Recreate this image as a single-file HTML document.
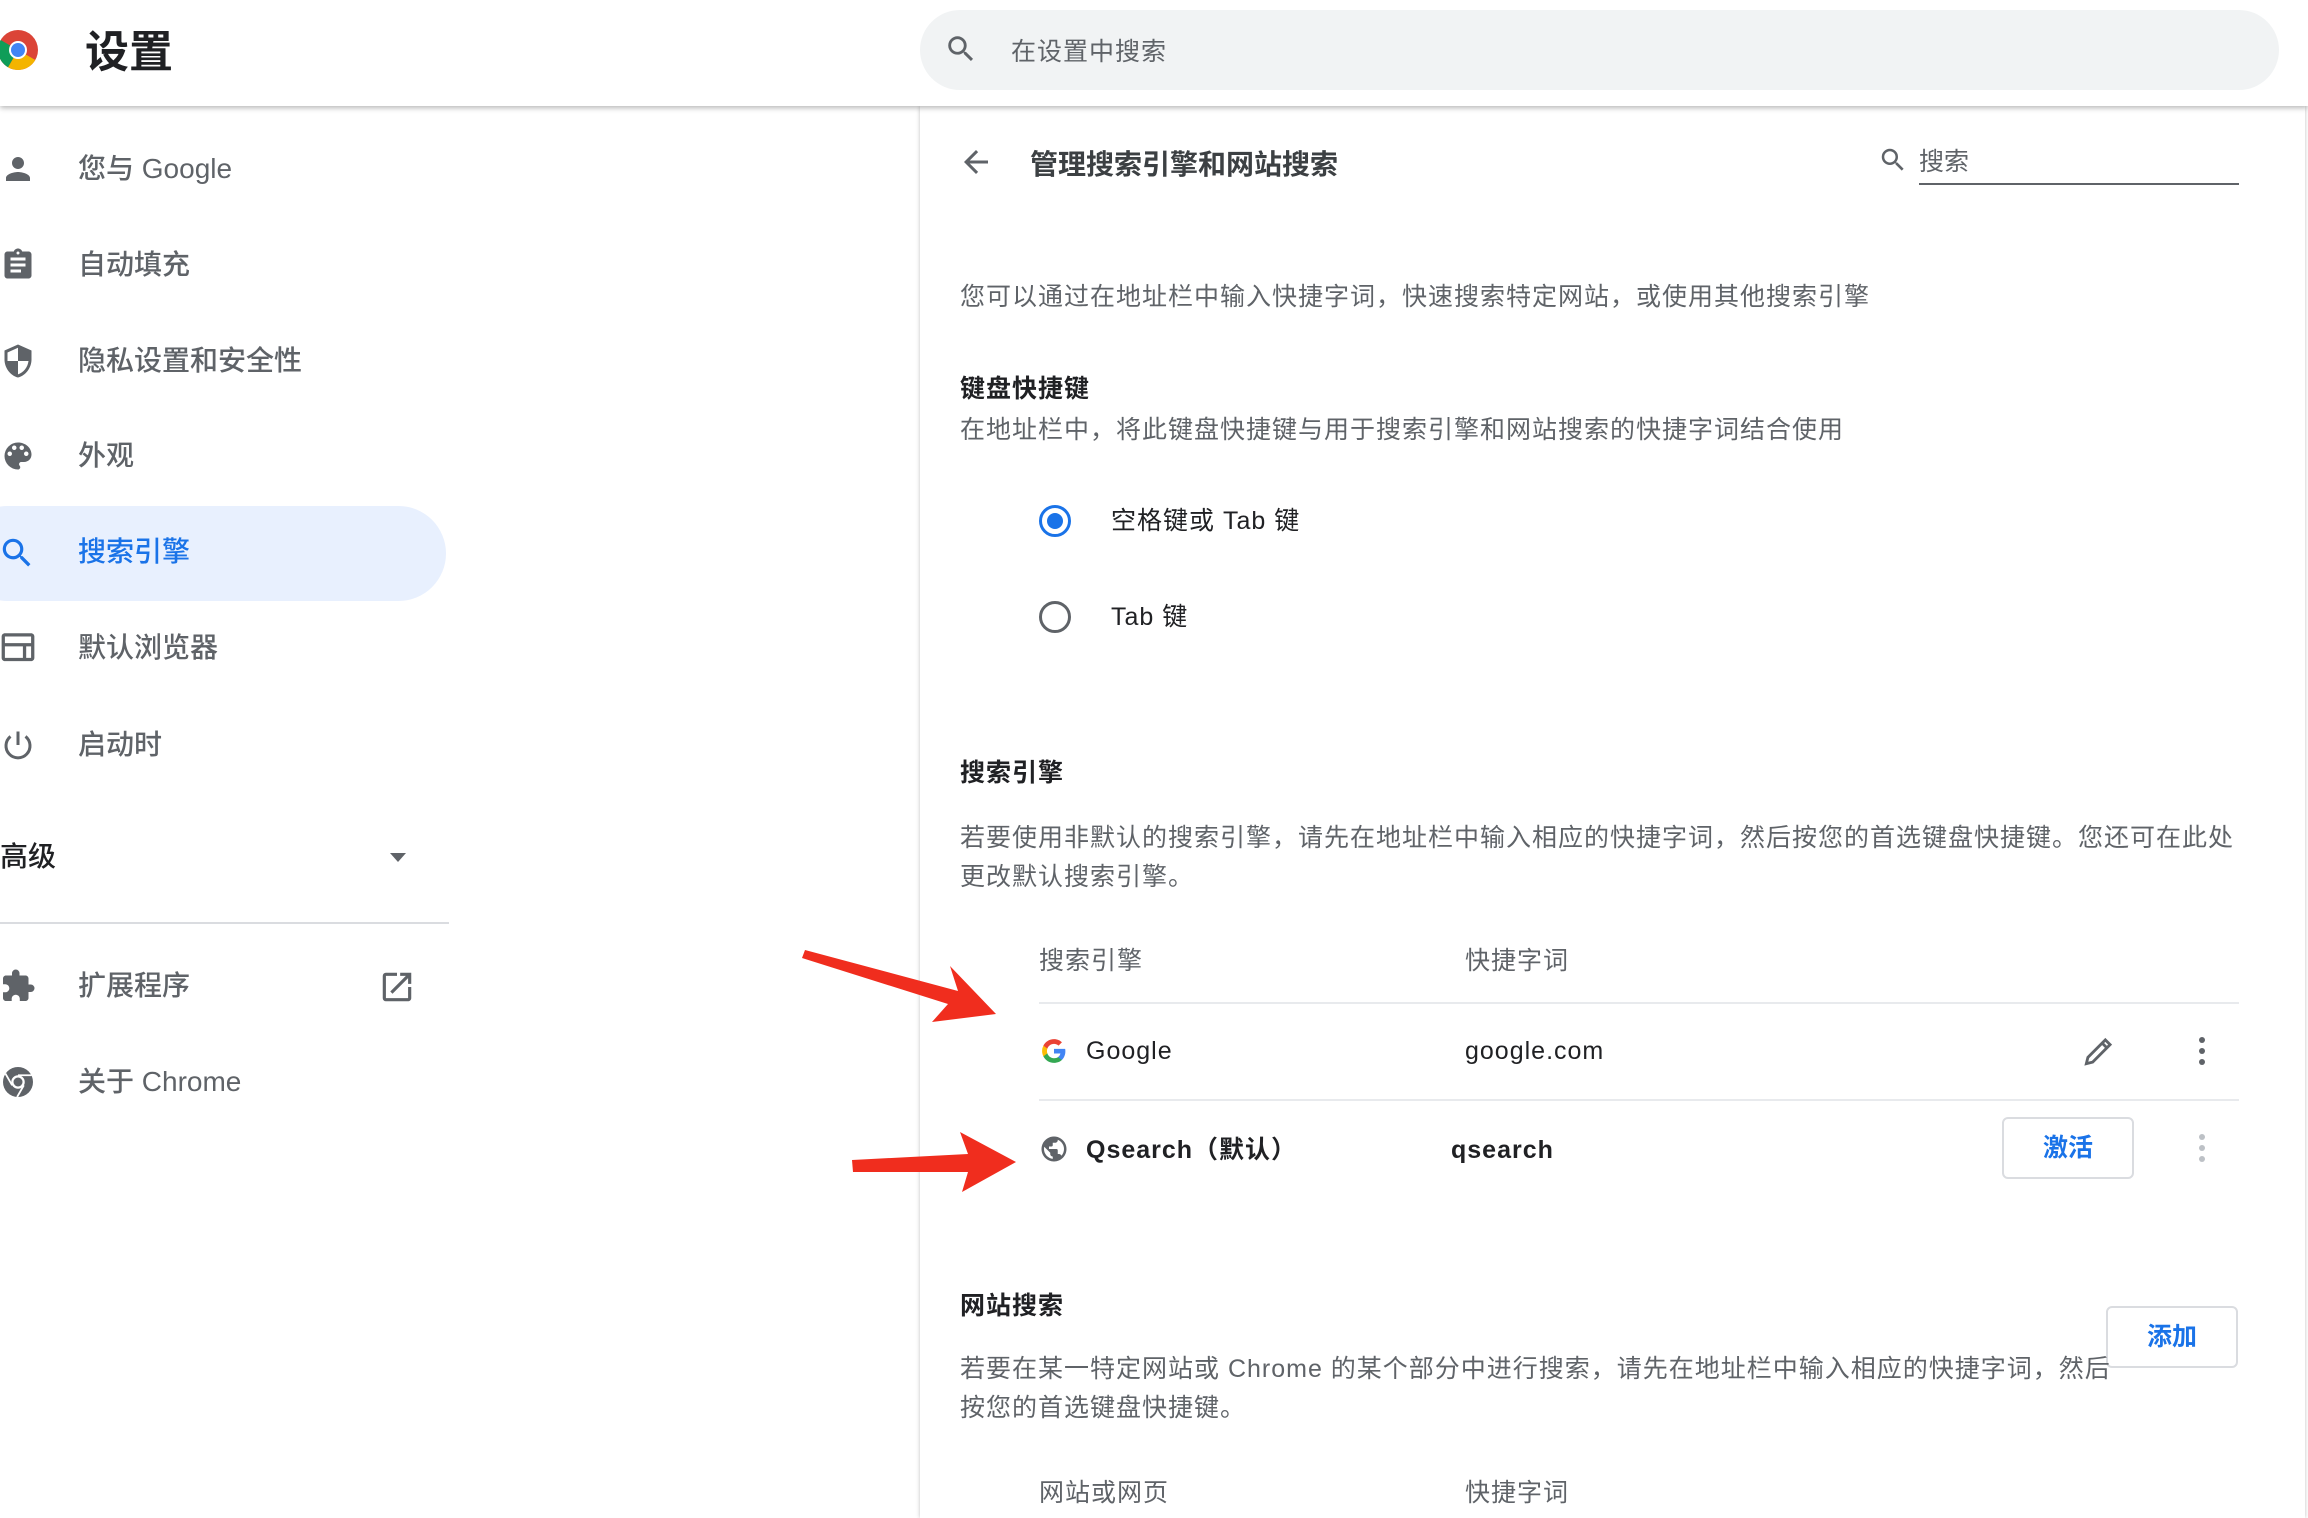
<!DOCTYPE html>
<html><head><meta charset="utf-8"><style>
*{margin:0;padding:0;box-sizing:border-box}
body{width:2308px;height:1518px;overflow:hidden;background:#fff;font-family:"Liberation Sans","Noto Sans CJK SC",sans-serif;color:#202124;position:relative}
.a{position:absolute;white-space:nowrap}
.hdr{position:absolute;left:0;top:0;width:2308px;height:106px;background:#fff;box-shadow:0 2px 5px rgba(0,0,0,.28);z-index:5}
.side{font-size:28px;color:#5f6368;font-weight:500;line-height:36px}
.card{position:absolute;left:920px;top:106px;width:1385px;height:1412px;background:#fff;box-shadow:0 0 4px rgba(0,0,0,.25)}
.t{font-size:25px;color:#5f6368;line-height:36px;letter-spacing:1px}
.b{font-weight:bold;color:#202124}
</style></head><body>
<div class="hdr">
  <svg class="a" style="left:-4px;top:28px" width="44" height="44" viewBox="0 0 44 44">
    <circle cx="22" cy="22" r="20" fill="#db4437"/>
    <path d="M22 22 L39.3 32 A20 20 0 0 1 12 39.3 Z" fill="#f4b400"/>
    <path d="M22 22 L12 39.3 A20 20 0 0 1 4.7 12 Z" fill="#0f9d58"/>
    <circle cx="22" cy="22" r="9" fill="#fff"/><circle cx="22" cy="22" r="7" fill="#4285f4"/>
  </svg>
  <div class="a" style="left:85px;top:16px;font-size:44px;font-weight:bold;color:#202124">设置</div>
  <div class="a" style="left:920px;top:10px;width:1359px;height:80px;border-radius:40px;background:#f1f3f4"></div>
  <svg class="a" style="left:944px;top:32px" width="34" height="34" viewBox="0 0 24 24"><path fill="#5f6368" d="M15.5 14h-.79l-.28-.27A6.47 6.47 0 0 0 16 9.5 6.5 6.5 0 1 0 9.5 16c1.61 0 3.09-.59 4.23-1.57l.27.28v.79l5 4.99L20.49 19l-4.99-5zm-6 0C7.01 14 5 11.99 5 9.5S7.01 5 9.5 5 14 7.01 14 9.5 11.99 14 9.5 14z"/></svg>
  <div class="a" style="left:1011px;top:32px;font-size:25px;color:#5f6368;letter-spacing:1px">在设置中搜索</div>
</div>

<!-- sidebar -->
<div class="a" style="left:-40px;top:506px;width:486px;height:95px;border-radius:48px;background:#e8f0fe"></div>
<svg class="a" style="left:0px;top:151px" width="36" height="36" viewBox="0 0 24 24"><path fill="#5f6368" d="M12 12c2.2 0 4-1.8 4-4s-1.8-4-4-4-4 1.8-4 4 1.8 4 4 4zm0 2c-2.7 0-8 1.3-8 4v2h16v-2c0-2.7-5.3-4-8-4z"/></svg>
<div class="a side" style="left:78px;top:151px">您与 Google</div>
<svg class="a" style="left:0px;top:247px" width="36" height="36" viewBox="0 0 24 24"><path fill="#5f6368" d="M19 3h-4.2C14.4 1.8 13.3 1 12 1s-2.4.8-2.8 2H5c-1.1 0-2 .9-2 2v14c0 1.1.9 2 2 2h14c1.1 0 2-.9 2-2V5c0-1.1-.9-2-2-2zm-7 0c.6 0 1 .4 1 1s-.4 1-1 1-1-.4-1-1 .4-1 1-1zm2 14H7v-2h7v2zm3-4H7v-2h10v2zm0-4H7V7h10v2z"/></svg>
<div class="a side" style="left:78px;top:247px">自动填充</div>
<svg class="a" style="left:0px;top:343px" width="36" height="36" viewBox="0 0 24 24"><path fill="#5f6368" d="M12 1L3 5v6c0 5.5 3.8 10.7 9 12 5.2-1.3 9-6.5 9-12V5l-9-4zm0 10.99h7c-.5 4.1-3.3 7.8-7 8.9V12H5V6.3l7-3.1v8.8z"/></svg>
<div class="a side" style="left:78px;top:343px">隐私设置和安全性</div>
<svg class="a" style="left:0px;top:438px" width="36" height="36" viewBox="0 0 24 24"><path fill="#5f6368" d="M12 3a9 9 0 0 0 0 18c.8 0 1.5-.7 1.5-1.5 0-.4-.1-.7-.4-1-.2-.3-.4-.6-.4-1 0-.8.7-1.5 1.5-1.5H16c2.8 0 5-2.2 5-5 0-4.4-4-8-9-8zm-5.5 9a1.5 1.5 0 1 1 0-3 1.5 1.5 0 0 1 0 3zm3-4a1.5 1.5 0 1 1 0-3 1.5 1.5 0 0 1 0 3zm5 0a1.5 1.5 0 1 1 0-3 1.5 1.5 0 0 1 0 3zm3 4a1.5 1.5 0 1 1 0-3 1.5 1.5 0 0 1 0 3z"/></svg>
<div class="a side" style="left:78px;top:438px">外观</div>
<svg class="a" style="left:-2px;top:534px" width="38" height="38" viewBox="0 0 24 24"><path fill="#1a73e8" d="M15.5 14h-.79l-.28-.27A6.47 6.47 0 0 0 16 9.5 6.5 6.5 0 1 0 9.5 16c1.61 0 3.09-.59 4.23-1.57l.27.28v.79l5 4.99L20.49 19l-4.99-5zm-6 0C7.01 14 5 11.99 5 9.5S7.01 5 9.5 5 14 7.01 14 9.5 11.99 14 9.5 14z"/></svg>
<div class="a side" style="left:78px;top:534px;color:#1a73e8">搜索引擎</div>
<svg class="a" style="left:-2px;top:630px" width="40" height="36" viewBox="0 0 24 22"><path fill="#5f6368" d="M20 2H4c-1.1 0-2 .9-2 2v13c0 1.1.9 2 2 2h16c1.1 0 2-.9 2-2V4c0-1.1-.9-2-2-2zm-5 15H4v-7h11v7zm5 0h-3V10h3v7zM20 8H4V4h16v4z"/></svg>
<div class="a side" style="left:78px;top:630px">默认浏览器</div>
<svg class="a" style="left:0px;top:727px" width="36" height="36" viewBox="0 0 24 24"><path fill="none" stroke="#5f6368" stroke-width="2" d="M12 3v9M7 6.3A8 8 0 1 0 17 6.3"/></svg>
<div class="a side" style="left:78px;top:727px">启动时</div>
<div class="a side" style="left:0;top:839px;color:#202124;font-weight:500">高级</div>
<svg class="a" style="left:388px;top:850px" width="20" height="14"><path d="M2 3h16l-8 9z" fill="#5f6368"/></svg>
<div class="a" style="left:0;top:922px;width:449px;height:2px;background:#dadce0"></div>
<svg class="a" style="left:0px;top:968px" width="36" height="36" viewBox="0 0 24 24"><path fill="#5f6368" d="M20.5 11H19V7c0-1.1-.9-2-2-2h-4V3.5a2.5 2.5 0 0 0-5 0V5H4c-1.1 0-2 .9-2 2v3.8h1.5c1.5 0 2.7 1.2 2.7 2.7S5 16.2 3.5 16.2H2V20c0 1.1.9 2 2 2h3.8v-1.5c0-1.5 1.2-2.7 2.7-2.7s2.7 1.2 2.7 2.7V22H17c1.1 0 2-.9 2-2v-4h1.5a2.5 2.5 0 0 0 0-5z"/></svg>
<div class="a side" style="left:78px;top:968px">扩展程序</div>
<svg class="a" style="left:378px;top:968px" width="38" height="38" viewBox="0 0 24 24"><path fill="#5f6368" d="M19 19H5V5h7V3H5a2 2 0 0 0-2 2v14a2 2 0 0 0 2 2h14c1.1 0 2-.9 2-2v-7h-2v7zM14 3v2h3.59l-9.83 9.83 1.41 1.41L19 6.41V10h2V3h-7z"/></svg>
<svg class="a" style="left:0px;top:1064px" width="36" height="36" viewBox="0 0 24 24"><circle cx="12" cy="12" r="10" fill="#5f6368"/><circle cx="12" cy="12" r="4.5" fill="#fff"/><circle cx="12" cy="12" r="3" fill="#5f6368"/><path d="M12 7.5h9M8.1 14.2 3.6 6.4M15.9 14.2l-4.5 7.8" stroke="#fff" stroke-width="1.2"/></svg>
<div class="a side" style="left:78px;top:1064px">关于 Chrome</div>

<!-- card -->
<div class="card"></div>
<svg class="a" style="left:958px;top:144px" width="36" height="36" viewBox="0 0 24 24"><path fill="#5f6368" d="M20 11H7.83l5.59-5.59L12 4l-8 8 8 8 1.41-1.41L7.83 13H20v-2z"/></svg>
<div class="a" style="left:1030px;top:143px;font-size:28px;font-weight:bold;color:#3c4043">管理搜索引擎和网站搜索</div>
<svg class="a" style="left:1878px;top:145px" width="30" height="30" viewBox="0 0 24 24"><path fill="#5f6368" d="M15.5 14h-.79l-.28-.27A6.47 6.47 0 0 0 16 9.5 6.5 6.5 0 1 0 9.5 16c1.61 0 3.09-.59 4.23-1.57l.27.28v.79l5 4.99L20.49 19l-4.99-5zm-6 0C7.01 14 5 11.99 5 9.5S7.01 5 9.5 5 14 7.01 14 9.5 11.99 14 9.5 14z"/></svg>
<div class="a" style="left:1919px;top:142px;font-size:25px;color:#5f6368">搜索</div>
<div class="a" style="left:1919px;top:183px;width:320px;height:2px;background:#5f6368"></div>

<div class="a t" style="left:960px;top:279px">您可以通过在地址栏中输入快捷字词，快速搜索特定网站，或使用其他搜索引擎</div>
<div class="a t b" style="left:960px;top:371px">键盘快捷键</div>
<div class="a t" style="left:960px;top:412px">在地址栏中，将此键盘快捷键与用于搜索引擎和网站搜索的快捷字词结合使用</div>
<div class="a" style="left:1039px;top:505px;width:32px;height:32px;border-radius:50%;border:3px solid #1a73e8"></div>
<div class="a" style="left:1047px;top:513px;width:16px;height:16px;border-radius:50%;background:#1a73e8"></div>
<div class="a t" style="left:1111px;top:503px;color:#202124">空格键或 Tab 键</div>
<div class="a" style="left:1039px;top:601px;width:32px;height:32px;border-radius:50%;border:3px solid #5f6368"></div>
<div class="a t" style="left:1111px;top:599px;color:#202124">Tab 键</div>

<div class="a t b" style="left:960px;top:755px">搜索引擎</div>
<div class="a t" style="left:960px;top:819px;line-height:39px">若要使用非默认的搜索引擎，请先在地址栏中输入相应的快捷字词，然后按您的首选键盘快捷键。您还可在此处<br>更改默认搜索引擎。</div>
<div class="a t" style="left:1039px;top:943px">搜索引擎</div>
<div class="a t" style="left:1465px;top:943px">快捷字词</div>
<div class="a" style="left:1039px;top:1002px;width:1200px;height:2px;background:#e8eaed"></div>
<svg class="a" style="left:1041px;top:1038px" width="26" height="26" viewBox="0 0 48 48"><path fill="#4285f4" d="M45 24.5c0-1.6-.1-3.1-.4-4.5H24v8.5h11.8c-.5 2.7-2 5-4.4 6.6v5.5h7.1C42.6 36.8 45 31.1 45 24.5z"/><path fill="#34a853" d="M24 46c5.9 0 10.9-2 14.5-5.3l-7.1-5.5c-2 1.3-4.5 2.1-7.4 2.1-5.7 0-10.6-3.9-12.3-9H4.4v5.7C8 41.1 15.4 46 24 46z"/><path fill="#fbbc05" d="M11.7 28.3c-.4-1.3-.7-2.7-.7-4.3s.3-3 .7-4.3V14H4.4A22 22 0 0 0 2 24c0 3.6.9 6.9 2.4 9.9l7.3-5.6z"/><path fill="#ea4335" d="M24 10.8c3.2 0 6.1 1.1 8.4 3.3l6.3-6.3C34.9 4.2 29.9 2 24 2 15.4 2 8 6.9 4.4 14.1l7.3 5.6c1.7-5 6.6-8.9 12.3-8.9z"/></svg>
<div class="a t" style="left:1086px;top:1033px;color:#202124">Google</div>
<div class="a t" style="left:1465px;top:1033px;color:#202124">google.com</div>
<svg class="a" style="left:2080px;top:1032px" width="38" height="38" viewBox="0 0 24 24"><path fill="none" stroke="#5f6368" stroke-width="1.8" d="M4 20l1-4L16 5l3 3L8 19z M14 7l3 3"/></svg>
<svg class="a" style="left:2194px;top:1034px" width="16" height="34"><circle cx="8" cy="6" r="3" fill="#5f6368"/><circle cx="8" cy="17" r="3" fill="#5f6368"/><circle cx="8" cy="28" r="3" fill="#5f6368"/></svg>
<div class="a" style="left:1039px;top:1099px;width:1200px;height:2px;background:#e8eaed"></div>
<svg class="a" style="left:1039px;top:1134px" width="30" height="30" viewBox="0 0 24 24"><path fill="#5f6368" d="M12 2C6.5 2 2 6.5 2 12s4.5 10 10 10 10-4.5 10-10S17.5 2 12 2zm-1 17.9c-3.9-.5-7-3.9-7-7.9 0-.6.1-1.2.2-1.8L9 15v1c0 1.1.9 2 2 2v1.9zm6.9-2.5c-.3-.8-1-1.4-1.9-1.4h-1v-3c0-.6-.4-1-1-1H8v-2h2c.6 0 1-.4 1-1V7h2c1.1 0 2-.9 2-2v-.4c2.9 1.2 5 4.1 5 7.4 0 2.1-.8 4-2.1 5.4z"/></svg>
<div class="a t b" style="left:1086px;top:1132px">Qsearch（默认）</div>
<div class="a t b" style="left:1451px;top:1132px">qsearch</div>
<div class="a" style="left:2002px;top:1117px;width:132px;height:62px;border:2px solid #dadce0;border-radius:6px;color:#1a73e8;font-size:25px;font-weight:bold;text-align:center;line-height:58px">激活</div>
<svg class="a" style="left:2194px;top:1131px" width="16" height="34"><circle cx="8" cy="6" r="3" fill="#bdc1c6"/><circle cx="8" cy="17" r="3" fill="#bdc1c6"/><circle cx="8" cy="28" r="3" fill="#bdc1c6"/></svg>

<div class="a t b" style="left:960px;top:1288px">网站搜索</div>
<div class="a" style="left:2106px;top:1306px;width:132px;height:62px;border:2px solid #dadce0;border-radius:6px;color:#1a73e8;font-size:25px;font-weight:bold;text-align:center;line-height:58px">添加</div>
<div class="a t" style="left:960px;top:1350px;line-height:39px">若要在某一特定网站或 Chrome 的某个部分中进行搜索，请先在地址栏中输入相应的快捷字词，然后<br>按您的首选键盘快捷键。</div>
<div class="a t" style="left:1039px;top:1475px">网站或网页</div>
<div class="a t" style="left:1465px;top:1475px">快捷字词</div>

<!-- red arrows -->
<svg class="a" style="left:0;top:0" width="2308" height="1518">
  <path d="M805 950 L958 991 L950 966 L996 1014 L932 1022 L948 1004 L802 958 Z" fill="#f02d1e"/>
  <path d="M852 1160 L968 1154 L960 1132 L1016 1162 L962 1192 L968 1172 L853 1172 Z" fill="#f02d1e"/>
</svg>
</body></html>
